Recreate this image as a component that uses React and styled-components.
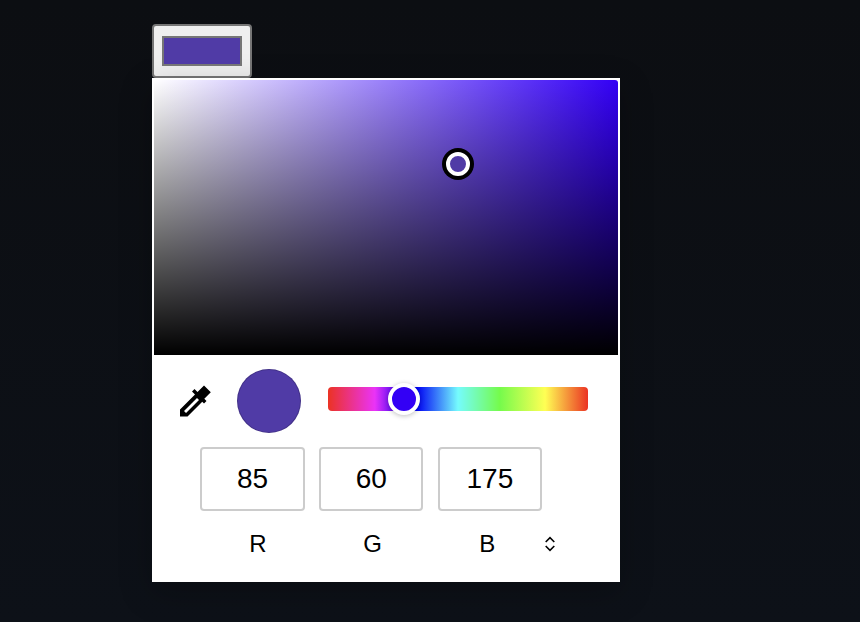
import React from 'react';
import styled, { createGlobalStyle } from 'styled-components';

const GlobalStyle = createGlobalStyle`
	html, body {
		margin: 0;
		height: 100%;
	}
	body {
		background: linear-gradient(180deg, #0c0e12 0%, #0d1118 100%);
		font-family: 'Liberation Sans', Arial, sans-serif;
		overflow: hidden;
	}
`;

const Page = styled.div`
	width: 860px;
	height: 622px;
	box-sizing: border-box;
	padding: 24px 0 0 152px;
`;

const SwatchButton = styled.button`
	display: flex;
	align-items: center;
	justify-content: center;
	width: 100px;
	height: 54px;
	padding: 0;
	box-sizing: border-box;
	background: #efefef;
	border: 2px solid #767676;
	border-radius: 4px;
`;

const SwatchFill = styled.span`
	display: block;
	width: 80px;
	height: 30px;
	box-sizing: border-box;
	background: #503ba6;
	border: 2px solid #767676;
`;

const Panel = styled.div`
	width: 468px;
	height: 504px;
	box-sizing: border-box;
	padding: 2px 2px 0;
	background: #fff;
	box-shadow: 0 10px 30px rgba(0, 0, 0, 0.25);
`;

const SaturationArea = styled.div`
	position: relative;
	height: 275px;
	border-radius: 3px 3px 0 0;
	background:
		linear-gradient(to top, #000, rgba(0, 0, 0, 0)),
		linear-gradient(to right, #fff, #3300f5);
`;

const Cursor = styled.div`
	position: absolute;
	left: 292px;
	top: 72px;
	width: 24px;
	height: 24px;
	box-sizing: border-box;
	border: 4.5px solid #fff;
	border-radius: 50%;
	background: #503ba6;
	box-shadow: 0 0 0 4px #000;
`;

const ControlsRow = styled.div`
	display: flex;
	align-items: center;
	height: 64px;
	margin-top: 14px;
`;

const Dropper = styled.svg`
	display: block;
	width: 40px;
	height: 40px;
	margin: -2px 0 0 21px;
	fill: #000;
`;

const Preview = styled.div`
	width: 64px;
	height: 64px;
	box-sizing: border-box;
	margin-left: 22px;
	border: 1px solid rgba(0, 0, 0, 0.18);
	border-radius: 50%;
	background: #503ba6;
`;

const HueTrack = styled.div`
	position: relative;
	width: 260px;
	height: 24px;
	margin: -4px 0 0 27px;
	border-radius: 4px;
	background: linear-gradient(
		to right,
		#eb3323 0%,
		#ea33f7 18%,
		#2a00f5 28%,
		#0000f5 34%,
		#75fbfd 50%,
		#75fb4c 66%,
		#ffff54 83.5%,
		#eb3323 100%
	);
`;

const HueThumb = styled.div`
	position: absolute;
	left: 60px;
	top: -4px;
	width: 32px;
	height: 32px;
	box-sizing: border-box;
	border: 4px solid #fff;
	border-radius: 50%;
	background: #3300f5;
	box-shadow: 0 1px 5px rgba(0, 0, 0, 0.25);
`;

const FieldRow = styled.div`
	display: flex;
	gap: 14.4px;
	margin: 14px 0 0 46.4px;
`;

const Field = styled.input`
	width: 104.3px;
	height: 64px;
	box-sizing: border-box;
	padding: 0;
	border: 2px solid #ccc;
	border-radius: 4px;
	background: #fff;
	color: #000;
	font-family: inherit;
	font-size: 28px;
	text-align: center;
	outline: none;
`;

const LabelRow = styled.div`
	display: flex;
	align-items: center;
	height: 28px;
	margin: 19px 0 0 46.5px;
`;

const Label = styled.span`
	width: 114.75px;
	color: #000;
	font-size: 24px;
	line-height: 28px;
	text-align: center;
`;

const Chevrons = styled.svg`
	display: block;
	width: 14px;
	height: 16px;
	margin-left: -1.5px;
	fill: none;
	stroke: #000;
	stroke-width: 1.6;
`;

const channels = [
	{ name: 'R', value: 85 },
	{ name: 'G', value: 60 },
	{ name: 'B', value: 175 },
];

const App = () => (
	<>
		<GlobalStyle />
		<Page>
			<SwatchButton type="button" aria-label="Pick colour">
				<SwatchFill />
			</SwatchButton>
			<Panel>
				<SaturationArea>
					<Cursor />
				</SaturationArea>
				<ControlsRow>
					<Dropper viewBox="0 0 40 40">
						<path
							fillRule="evenodd"
							d="M29 5.5L35.8 12.3L29.3 18.8L31.5 21L29 23.5L27.25 21.75L12.5 36.5H5V29.5L20 14.5L17 11.5L19.5 9L22.5 12ZM22 18L9 31L11 33L24 20Z"
						/>
					</Dropper>
					<Preview />
					<HueTrack>
						<HueThumb />
					</HueTrack>
				</ControlsRow>
				<FieldRow>
					{channels.map((channel) => (
						<Field key={channel.name} readOnly value={channel.value} />
					))}
				</FieldRow>
				<LabelRow>
					{channels.map((channel) => (
						<Label key={channel.name}>{channel.name}</Label>
					))}
					<Chevrons viewBox="0 0 14 16">
						<path d="M2.7 6L7 1.7L11.3 6M2.7 10L7 14.3L11.3 10" />
					</Chevrons>
				</LabelRow>
			</Panel>
		</Page>
	</>
);

export default App;
